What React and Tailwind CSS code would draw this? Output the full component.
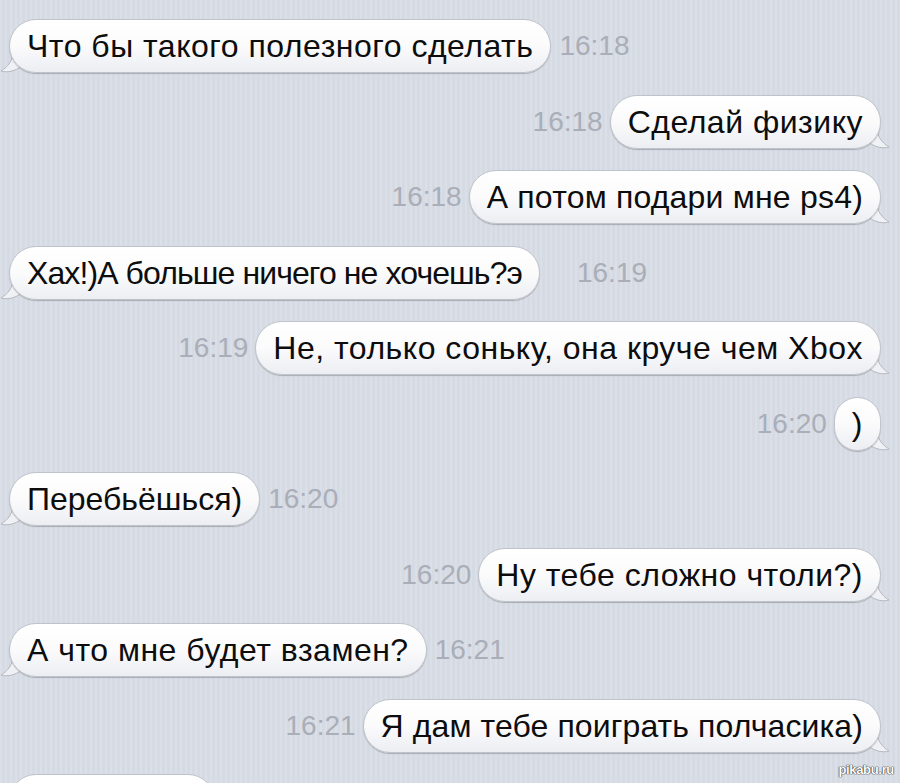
import React from 'react';

const messages = [
  { side: 'in', text: 'Что бы такого полезного сделать', time: '16:18' },
  { side: 'out', text: 'Сделай физику', time: '16:18' },
  { side: 'out', text: 'А потом подари мне ps4)', time: '16:18', track: 'tracking-[0.2px]' },
  { side: 'in', text: 'Хах!)А больше ничего не хочешь?э', time: '16:19', track: 'tracking-[-0.9px]', wide: true },
  { side: 'out', text: 'Не, только соньку, она круче чем Xbox', time: '16:19' },
  { side: 'out', text: ')', time: '16:20' },
  { side: 'in', text: 'Перебьёшься)', time: '16:20', track: 'tracking-[0px]' },
  { side: 'out', text: 'Ну тебе сложно чтоли?)', time: '16:20' },
  { side: 'in', text: 'А что мне будет взамен?', time: '16:21' },
  { side: 'out', text: 'Я дам тебе поиграть полчасика)', time: '16:21', track: 'tracking-[0.1px]' },
];

function Tail({ side }) {
  if (side === 'in') {
    return (
      <svg width="22" height="22" viewBox="0 0 22 22" className="absolute -left-[9px] bottom-[-1px]">
        <path d="M13 0 C13 8 8 15 1 19 C8 21 15 19 22 14 L22 0 Z" fill="#eff1f4" />
        <path d="M13 0 C13 8 8 15 1 19 C8 21 15 19 22 14" fill="none" stroke="#b4b9c2" strokeWidth="1" />
      </svg>
    );
  }
  return (
    <svg width="22" height="22" viewBox="0 0 22 22" className="absolute -right-[9px] bottom-[-1px]">
      <path d="M9 0 C9 8 14 15 21 19 C14 21 7 19 0 14 L0 0 Z" fill="#eff1f4" />
      <path d="M9 0 C9 8 14 15 21 19 C14 21 7 19 0 14" fill="none" stroke="#b4b9c2" strokeWidth="1" />
    </svg>
  );
}

function Bubble({ side, text, className = 'tracking-[0.5px]' }) {
  return (
    <div className="relative">
      <Tail side={side} />
      <div className={`relative h-[54px] flex items-center px-[17px] rounded-full bg-gradient-to-b from-white via-[#fbfbfc] to-[#eceef2] border border-[#bfc4cc] shadow-[0_1px_1px_rgba(0,0,0,0.22)] text-[32px] text-[#0d0d0d] whitespace-nowrap ${className}`}>
        {text}
      </div>
    </div>
  );
}

function Row({ side, text, time, track, wide }) {
  const t = <span className="text-[28px] text-[#a9aeb8] whitespace-nowrap">{time}</span>;
  if (side === 'in') {
    return (
      <div className={`flex items-center pl-[9px] ${wide ? 'gap-[37px]' : 'gap-[8px]'}`}>
        <Bubble side={side} text={text} className={track} />
        {t}
      </div>
    );
  }
  return (
    <div className="flex items-center justify-end gap-[7px] pr-[19px]">
      {t}
      <Bubble side={side} text={text} className={track} />
    </div>
  );
}

export default function App() {
  return (
    <div
      className="relative w-[900px] h-[783px] overflow-hidden bg-[#d9dde6] bg-[repeating-linear-gradient(90deg,rgba(255,255,255,0.06)_0px,rgba(255,255,255,0.06)_2px,rgba(0,0,0,0.015)_2px,rgba(0,0,0,0.015)_5px)]"
      style={{ fontFamily: '"Liberation Sans", Arial, sans-serif' }}
    >
      <div className="flex flex-col gap-[21.5px] pt-[19px]">
        {messages.map((m, i) => (
          <Row key={i} {...m} />
        ))}
        <div className="flex pl-[9px]">
          <Bubble side="in" text="" className="w-[206px]" />
        </div>
      </div>
      <div className="absolute right-[6px] bottom-[4px] text-[13px] font-bold text-white tracking-tight [text-shadow:0_0_1px_#333,0_0_1px_#333,0_0_1px_#333]">
        pikabu.ru
      </div>
    </div>
  );
}
